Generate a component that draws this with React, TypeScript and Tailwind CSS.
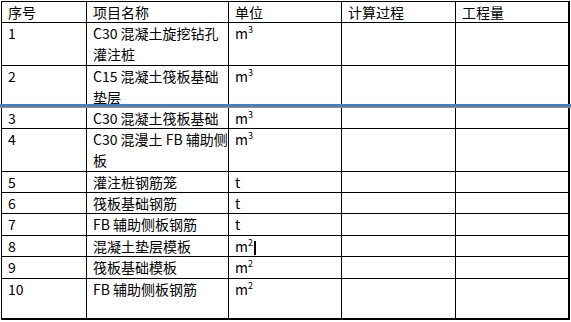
import React from 'react';

// filas de la tabla: alto de cada fila en px, y el contenido de cada celda
type Row = { h: number; no: string; name: string[]; unit: 'm3' | 'm2' | 't' | null };

const rows: Row[] = [
  { h: 43, no: '1', name: ['C30 混凝土旋挖钻孔', '灌注桩'], unit: 'm3' },
  { h: 42, no: '2', name: ['C15 混凝土筏板基础', '垫层'], unit: 'm3' },
  { h: 21, no: '3', name: ['C30 混凝土筏板基础'], unit: 'm3' },
  { h: 43, no: '4', name: ['C30 混漫土 FB 辅助侧', '板'], unit: 'm3' },
  { h: 21, no: '5', name: ['灌注桩钢筋笼'], unit: 't' },
  { h: 21, no: '6', name: ['筏板基础钢筋'], unit: 't' },
  { h: 22, no: '7', name: ['FB 辅助侧板钢筋'], unit: 't' },
  { h: 21, no: '8', name: ['混凝土垫层模板'], unit: 'm2' },
  { h: 22, no: '9', name: ['筏板基础模板'], unit: 'm2' },
  { h: 41, no: '10', name: ['FB 辅助侧板钢筋'], unit: 'm2' },
];

const Unit = ({ u, cursor }: { u: Row['unit']; cursor?: boolean }) => {
  if (!u) return null;
  if (u === 't') return <span>t</span>;
  return (
    <span>
      m<span className="text-[9px] relative -top-[6px]">{u === 'm3' ? '3' : '2'}</span>
      {cursor && <span className="inline-block align-[-3px] ml-[1px] w-[2px] h-[14px] bg-black" />}
    </span>
  );
};

const cell = 'border-r border-b border-black pl-[6px] leading-[21px] whitespace-nowrap overflow-hidden';

export default function App() {
  return (
    <div
      className="relative w-[571px] h-[322px] bg-white text-black text-[14px]"
      style={{ fontFamily: '"Noto Sans CJK SC", sans-serif' }}
    >
      <div className="absolute left-[1px] top-[1px] border-l border-t border-black grid grid-cols-[85px_142px_113px_114px_114px]">
        {/* cabecera */}
        <div className={`${cell} h-[21px]`}>序号</div>
        <div className={`${cell} h-[21px]`}>项目名称</div>
        <div className={`${cell} h-[21px]`}>单位</div>
        <div className={`${cell} h-[21px]`}>计算过程</div>
        <div className={`${cell} h-[21px] border-r-2`}>工程量</div>

        {rows.map((r, i) => {
          const last = i === rows.length - 1;
          const b = last ? 'border-b-2' : '';
          return (
            <React.Fragment key={r.no}>
              <div className={`${cell} ${b}`} style={{ height: r.h }}>
                {r.no}
              </div>
              <div className={`${cell} ${b} pl-[5px]`} style={{ height: r.h }}>
                {r.name.map((l, j) => (
                  <div key={j}>{l}</div>
                ))}
              </div>
              <div className={`${cell} ${b}`} style={{ height: r.h }}>
                <Unit u={r.unit} cursor={r.no === '8'} />
              </div>
              <div className={`${cell} ${b}`} style={{ height: r.h }} />
              <div className={`${cell} ${b} border-r-2`} style={{ height: r.h }} />
            </React.Fragment>
          );
        })}
      </div>

      {/* linea azul de arrastre encima de la tabla */}
      <div className="absolute left-0 right-0 top-[104px] h-[3px] bg-[#3d7fd6]" />
      <div className="absolute left-0 right-0 top-[107px] h-[1px] bg-[#c98a3e]" />
    </div>
  );
}
